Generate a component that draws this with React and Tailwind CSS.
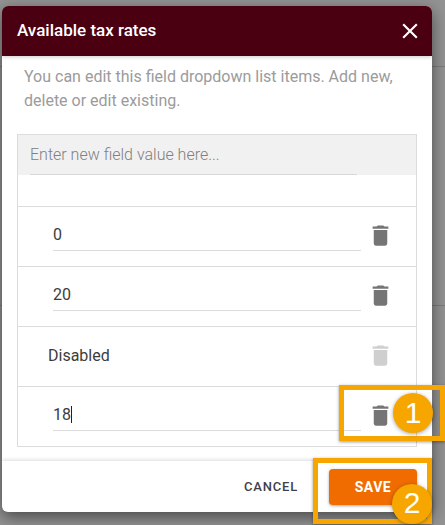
import React from 'react';

const TrashIcon = ({ className }) => (
  <svg viewBox="0 0 24 24" className={className} fill="currentColor">
    <path d="M6 19c0 1.1.9 2 2 2h8c1.1 0 2-.9 2-2V7H6v12zM19 4h-3.5l-1-1h-5l-1 1H5v2h14V4z" />
  </svg>
);

const rows = [
  { id: 1, value: '0' },
  { id: 2, value: '20' },
  { id: 3, value: 'Disabled', disabled: true },
  { id: 4, value: '18', focused: true },
];

const Row = ({ row }) => (
  <div className="h-[60px] border-t border-[#dcdcdc] flex items-center pl-[30px] box-border">
    {row.disabled ? (
      <div className="w-[313px] mt-[-2px] text-[16px] text-[#3c3c3c]">{row.value}</div>
    ) : (
      <div className="w-[308px] ml-[5px] mt-[-4px] h-[32px] pt-[1px] border-b border-[#dcdcdc] flex items-center text-[16px] text-[#3c3c3c]">
        <span>{row.value}</span>
        {row.focused && <span className="w-px h-[17px] bg-[#222]" />}
      </div>
    )}
    <TrashIcon className={`w-[27px] h-[27px] ml-[6px] mt-[-3px] ${row.disabled ? 'text-[#cfcfcf]' : 'text-[#757575]'}`} />
  </div>
);

export default function App() {
  return (
    <div className="relative w-[445px] h-[525px] overflow-hidden bg-[#939393] pl-[2px] pt-[6px] font-['Roboto',sans-serif]">
      {/* faint lines of the page behind the dialog */}
      <div className="absolute left-0 top-[66px] w-full h-px bg-[#7c7c7c]" />
      <div className="absolute left-0 top-[305px] w-full h-px bg-[#7c7c7c]" />

      <div className="relative w-[430px] h-[506px] bg-white rounded-[6px] overflow-hidden flex flex-col shadow-[0_5px_16px_rgba(0,0,0,0.5)]">
        {/* header */}
        <div className="h-[50px] shrink-0 bg-[#4a0011] flex items-center justify-between pl-[15px] pr-[9px] text-white shadow-[0_1px_4px_rgba(0,0,0,0.2)]">
          <span className="text-[17px] font-medium">Available tax rates</span>
          <svg viewBox="0 0 24 24" className="w-[26px] h-[26px]" fill="currentColor">
            <path d="M19 6.41 17.59 5 12 10.59 6.41 5 5 6.41 10.59 12 5 17.59 6.41 19 12 13.41 17.59 19 19 17.59 13.41 12z" />
          </svg>
        </div>

        {/* body */}
        <div className="flex-1 px-[15px] pt-[9px]">
          <p className="pl-[7px] pr-[8px] text-[16px] leading-[24px] text-[#9b9b9b]">
            You can edit this field dropdown list items. Add new, delete or edit existing.
          </p>
          <div className="mt-[21px] w-[400px] border border-[#dcdcdc]">
            <div className="h-[40px] bg-[#f1f1f1] pl-[12px] pr-[59px]">
              <div className="h-[40px] border-b border-[#d8d8d8] flex items-center text-[16px] text-[#808080] font-light">
                Enter new field value here...
              </div>
            </div>
            <div className="h-[31px]" />
            {rows.map((row) => (
              <Row key={row.id} row={row} />
            ))}
          </div>
        </div>

        {/* footer */}
        <div className="h-[51px] shrink-0 flex items-center justify-end pr-[15px] shadow-[0_-1px_4px_rgba(0,0,0,0.15)]">
          <span className="mr-[31px] text-[13px] font-medium tracking-[0.8px] text-[#3f3f4a]">CANCEL</span>
          <button className="w-[88px] h-[36px] pt-[1px] rounded-[4px] bg-[#f06c00] text-white text-[14px] font-bold tracking-[0.5px] shadow-[0_1px_3px_rgba(0,0,0,0.35)]">
            SAVE
          </button>
        </div>
      </div>

      {/* annotations */}
      <div className="absolute left-[339px] top-[385px] w-[106px] h-[56px] border-[5px] border-[#f7a600] shadow-[0_1px_3px_rgba(0,0,0,0.4)]" />
      <div className="absolute left-[313px] top-[458px] w-[119px] h-[66px] border-[5px] border-[#f7a600] shadow-[0_1px_3px_rgba(0,0,0,0.4)]" />
      <div className="absolute left-[393px] top-[393px] w-[40px] h-[40px] pb-[2px] rounded-full bg-[#f7a600] text-white text-[30px] flex items-center justify-center font-['Liberation_Sans',sans-serif] shadow-[0_1px_4px_rgba(0,0,0,0.35)]">
        1
      </div>
      <div className="absolute left-[392px] top-[484px] w-[40px] h-[40px] pb-[3px] rounded-full bg-[#f7a600] text-white text-[30px] flex items-center justify-center font-['Liberation_Sans',sans-serif] shadow-[0_1px_4px_rgba(0,0,0,0.35)]">
        2
      </div>
    </div>
  );
}
